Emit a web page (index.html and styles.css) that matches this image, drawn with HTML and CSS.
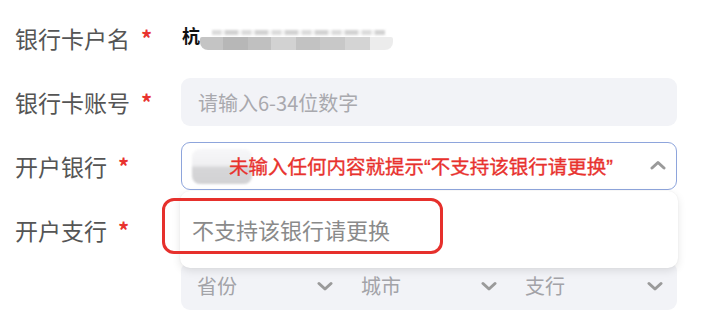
FILE: index.html
```html
<!DOCTYPE html>
<html lang="zh-CN">
<head>
<meta charset="utf-8">
<title>银行信息</title>
<link rel="stylesheet" href="styles.css">
</head>
<body>
<div class="form">
  <div class="row">
    <div class="label">银行卡户名<span class="req">*</span></div>
    <div class="field plain">
      <span class="name-first">杭</span>
      <span class="mosaic"><span class="mosaic-top"></span><span class="mosaic-band"></span></span>
    </div>
  </div>
  <div class="row">
    <div class="label">银行卡账号<span class="req">*</span></div>
    <div class="field input"><span class="ph">请输入6-34位数字</span></div>
  </div>
  <div class="row">
    <div class="label">开户银行<span class="req">*</span></div>
    <div class="field select-open">
      <span class="blur-patch"></span>
      <span class="note">未输入任何内容就提示<span class="q">“</span>不支持该银行请更换<span class="q">”</span></span>
      <svg class="chev up" viewBox="0 0 16 10" width="16" height="10"><polyline points="2,8 8,2.5 14,8" fill="none" stroke="#9a9a9a" stroke-width="3" stroke-linecap="round" stroke-linejoin="round"/></svg>
      <div class="dropdown">
        <div class="option">不支持该银行请更换</div>
        <div class="mark"></div>
      </div>
    </div>
  </div>
  <div class="row top">
    <div class="label tall">开户支行<span class="req">*</span></div>
    <div class="field stack">
      <div class="input"></div>
      <div class="input selects">
        <div class="sel"><span class="ph2">省份</span><svg class="chev" viewBox="0 0 16 10" width="16" height="10"><polyline points="2,2.5 8,8 14,2.5" fill="none" stroke="#9a9a9a" stroke-width="3" stroke-linecap="round" stroke-linejoin="round"/></svg></div>
        <div class="sel"><span class="ph2">城市</span><svg class="chev" viewBox="0 0 16 10" width="16" height="10"><polyline points="2,2.5 8,8 14,2.5" fill="none" stroke="#9a9a9a" stroke-width="3" stroke-linecap="round" stroke-linejoin="round"/></svg></div>
        <div class="sel"><span class="ph2">支行</span><svg class="chev" viewBox="0 0 16 10" width="16" height="10"><polyline points="2,2.5 8,8 14,2.5" fill="none" stroke="#9a9a9a" stroke-width="3" stroke-linecap="round" stroke-linejoin="round"/></svg></div>
      </div>
    </div>
  </div>
</div>
</body>
</html>
```

FILE: styles.css
```css
* { box-sizing: border-box; }
html, body { margin: 0; padding: 0; background: #ffffff; }
body {
  width: 706px;
  height: 332px;
  overflow: hidden;
  font-family: "Noto Sans CJK SC", "Noto Sans", sans-serif;
}
.form {
  display: flex;
  flex-direction: column;
  gap: 16px;
  padding: 14px 0 0 15px;
}
.row {
  display: grid;
  grid-template-columns: 166px 496px;
  align-items: center;
}
.row.top { align-items: start; }
.label {
  font-size: 23px;
  color: #555555;
  line-height: 48px;
  display: flex;
  align-items: center;
  white-space: nowrap;
}
.req {
  color: #e8322e;
  font-size: 22px;
  font-weight: 700;
  margin-left: 11px;
  margin-top: -2px;
}
.field { height: 48px; }
.plain {
  display: flex;
  align-items: center;
  padding-left: 1px;
}
.name-first {
  font-size: 18px;
  color: #111;
  font-weight: 700;
  margin-top: -6px;
}
.mosaic {
  position: relative;
  display: block;
  width: 193px;
  height: 30px;
}
.mosaic-top {
  position: absolute;
  left: 12px;
  right: 8px;
  top: 7px;
  height: 5px;
  background: repeating-linear-gradient(90deg, #cfcfcf 0 9px, #eeeeee 9px 13px, #c4c4c4 13px 26px, #f0f0f0 26px 30px);
  filter: blur(1px);
  opacity: 0.75;
}
.mosaic-band {
  position: absolute;
  left: 0;
  right: 0;
  top: 14px;
  height: 13px;
  border-radius: 2px 2px 8px 8px;
  background: linear-gradient(90deg, #c4c4c4 0 12%, #b7b7b7 12% 25%, #c0c0c0 25% 37%, #d2d2d2 37% 50%, #c2c2c2 50% 62%, #c8c8c8 62% 75%, #d4d4d4 75% 88%, #ececec 88% 100%);
  filter: blur(0.5px);
}
.input {
  height: 48px;
  background: #f2f3f7;
  border-radius: 9px;
  display: flex;
  align-items: center;
  padding-left: 17px;
}
.ph {
  font-size: 20px;
  color: #a9a9ae;
}
.select-open {
  position: relative;
  border: 1.5px solid #8ea5dc;
  border-radius: 9px;
  background: #ffffff;
  display: flex;
  align-items: center;
  padding: 0 9px 0 10px;
}
.blur-patch {
  display: block;
  width: 60px;
  height: 35px;
  border-radius: 8px;
  background: linear-gradient(180deg, #f7f7f9 0%, #f0f0f2 45%, #d6d6d8 55%, #d2d2d4 100%);
  filter: blur(1px);
  flex: none;
}
.note {
  margin-left: -23px;
  font-size: 19.5px;
  font-weight: 400;
  -webkit-text-stroke: 0.35px #e8322e;
  color: #e8322e;
  white-space: nowrap;
  flex: 1;
  position: relative;
  top: -1px;
}
.q { font-family: "Liberation Sans", sans-serif; font-size: 20px; }
.chev { display: block; flex: none; }
.chev.up { margin-right: 1px; margin-top: -2px; }
.dropdown {
  position: absolute;
  left: -2px;
  right: -2px;
  top: calc(100% + 2px);
  height: 77px;
  background: #ffffff;
  border-radius: 10px;
  box-shadow: 0 3px 8px rgba(0, 0, 0, 0.10), 0 0 2px rgba(0, 0, 0, 0.06);
  display: flex;
  align-items: center;
  padding-left: 12px;
  z-index: 5;
}
.option {
  font-size: 22px;
  color: #8a8a8a;
  margin-top: -1px;
}
.mark {
  position: absolute;
  left: -18px;
  top: 7px;
  width: 281px;
  height: 56px;
  border: 3px solid #e6302c;
  border-radius: 12px;
}
.stack {
  height: auto;
  display: flex;
  flex-direction: column;
  gap: 8px;
}
.selects {
  padding: 0;
  display: grid;
  grid-template-columns: 164px 164px 166px;
}
.sel {
  display: flex;
  align-items: center;
  justify-content: space-between;
  padding: 0 12px 0 16px;
}
.ph2 {
  font-size: 20px;
  color: #a3a3a8;
  margin-top: -2px;
}
```
